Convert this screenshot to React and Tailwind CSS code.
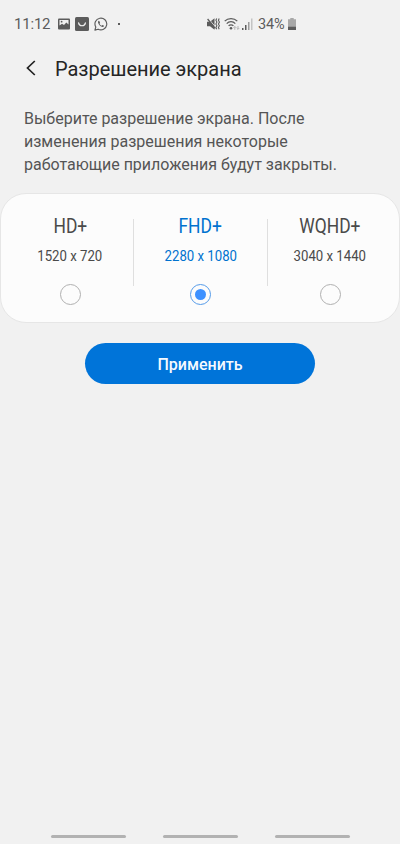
import { useState } from "react";

const resolutions = [
  { id: "hd", name: "HD+", size: "1520 x 720", width: "w-[126px]" },
  { id: "fhd", name: "FHD+", size: "2280 x 1080", width: "w-[133px]" },
  { id: "wqhd", name: "WQHD+", size: "3040 x 1440", width: "w-[124px]" },
];

function StatusBar() {
  return (
    <div className="h-12 pl-[14px] flex items-center text-[#5c5c5c]">
      <span className="w-[44px] text-[15px] leading-none tracking-[-0.2px]">11:12</span>

      {/* Gallery */}
      <svg width="12" height="12" viewBox="0 0 12 12">
        <rect y="0.5" width="12" height="11" rx="1" fill="currentColor" />
        <path d="M1.500 2h9v4.500L8.300 4.500 6 7 4 5.700 1.500 7.600z" fill="#f1f1f1" />
        <circle cx="3.600" cy="3.700" r="0.900" fill="currentColor" />
      </svg>

      {/* Store */}
      <svg className="ml-[5px]" width="14" height="14" viewBox="0 0 14 14" fill="none">
        <rect width="14" height="14" rx="1.5" fill="currentColor" />
        <path d="M3.600 5.800c.5 3.900 6.300 3.900 6.800 0" stroke="#f1f1f1" strokeWidth="1.200" strokeLinecap="round" />
      </svg>

      {/* WhatsApp */}
      <svg className="ml-[5px]" width="14" height="14" viewBox="0 0 14 14" fill="none">
        <path d="M.9 13.100 1.800 10A5.900 5.900 0 1 1 4.100 12.200z" stroke="currentColor" strokeWidth="1.150" strokeLinejoin="round" />
        <path
          d="M4.800 3.800c-.9.5-1 1.500-.5 2.500.8 1.700 1.900 2.800 3.600 3.500 1 .4 1.900.1 2.200-1l-1.700-.9-.8.8c-1-.4-1.700-1.100-2.100-2l.6-.8-.8-2z"
          fill="currentColor"
        />
      </svg>
      <span className="ml-[10px] w-[2px] h-[2px] bg-[#5c5c5c]" />

      {/* Muted with vibration */}
      <svg className="ml-[87px]" width="13" height="14" viewBox="0 0 13 14" fill="none">
        <path d="M0 4.700h3L7.500 1.200v11.600L3 9.300H0z" fill="currentColor" />
        <path d="M1.500 1.700 9 10.700" stroke="#f1f1f1" strokeWidth="0.900" />
        <path d="M.6 2 8.200 11.300" stroke="currentColor" strokeWidth="1.300" />
        <path d="m9.700 1.500-.8 1.800 1 1.800-1 1.800 1 1.800-1 1.800.8 1.800M12.200 1.500l-.8 1.800 1 1.800-1 1.800 1 1.800-1 1.800.8 1.800" stroke="currentColor" strokeWidth="1.100" />
      </svg>

      {/* Wi-Fi */}
      <svg className="ml-[4px]" width="17" height="14" viewBox="0 0 17 14" fill="none">
        <path d="M.7 4.200c3.300-3.600 9.300-3.600 12.600 0M2.700 6.600c2.300-2.500 6.300-2.500 8.600 0M4.600 8.900c1.300-1.400 3.500-1.400 4.800 0" stroke="currentColor" strokeWidth="1.250" />
        <circle cx="7" cy="11.200" r="1.300" fill="currentColor" />
        <path d="M10.800 12.800V9.500m-1.300 1.300 1.300-1.300 1.300 1.300M14 9v3.300m-1.300-1.300 1.300 1.300 1.300-1.300" stroke="#b5b5b5" strokeWidth="1" />
      </svg>

      {/* Signal */}
      <svg className="ml-[1px]" width="11" height="12" viewBox="0 0 11 12">
        <rect x="0" y="10" width="1.500" height="2" fill="currentColor" />
        <rect x="3" y="7" width="1.500" height="5" fill="currentColor" />
        <rect x="6" y="4" width="1.500" height="8" fill="#9c9c9c" />
        <rect x="9" y="0.500" width="1.500" height="11.500" fill="#c4c4c4" />
      </svg>

      <span className="ml-[5px] mt-[2px] w-[29px] text-[14.5px] leading-none tracking-[-0.2px]">34%</span>

      {/* Battery */}
      <svg className="ml-[1px]" width="8" height="12" viewBox="0 0 8 12">
        <path d="M2.300 0h3.400v1.200H8V8.500H0V1.200h2.300z" fill="#a8a8a8" />
        <path d="M0 8.500h8V12H0z" fill="#5c5c5c" />
      </svg>
    </div>
  );
}

function Option({ item, checked, onSelect }) {
  return (
    <button
      onClick={onSelect}
      className={`flex flex-col items-center pt-5 ${item.width} ${checked ? "text-[#0072cf]" : "text-[#4a4a4a]"}`}
    >
      <span className="text-[21px] leading-6 scale-x-[0.83] whitespace-nowrap">{item.name}</span>
      <span className="mt-[9px] text-[14.5px] leading-5 scale-x-[0.91] whitespace-nowrap">{item.size}</span>
      <span
        className={`mt-[17px] w-[21px] h-[21px] rounded-full border flex items-center justify-center ${
          checked ? "border-[#559be9]" : "border-[#b0b0b0]"
        }`}
      >
        {checked && <span className="w-[11px] h-[11px] rounded-full bg-[#3e91ff]" />}
      </span>
    </button>
  );
}

export default function App() {
  const [selected, setSelected] = useState("fhd");

  return (
    <div className="w-full h-screen bg-[#f1f1f1] flex flex-col overflow-hidden font-[Roboto,sans-serif]">
      <StatusBar />

      <header className="h-[42px] pl-[26px] flex items-center">
        <svg className="-mt-[2px]" width="10" height="16" viewBox="0 0 10 16" fill="none">
          <path d="M8.800 1 1.500 8l7.300 7" stroke="#222222" strokeWidth="1.700" />
        </svg>
        <h1 className="ml-[19px] text-[20px] leading-6 tracking-[-0.02px] text-[#252525] whitespace-nowrap">
          Разрешение экрана
        </h1>
      </header>

      <p className="mt-[17px] pl-6 text-[16px] leading-[23px] tracking-[-0.01px] text-[#555555] whitespace-nowrap">
        Выберите разрешение экрана. После
        <br />
        изменения разрешения некоторые
        <br />
        работающие приложения будут закрыты.
      </p>

      {/* Resolution card */}
      <div className="mt-[17px] h-[130px] px-[6px] flex shrink-0 bg-[#fcfcfc] border border-[#e6e6e6] rounded-[26px]">
        {resolutions.map((item, idx) => (
          <div key={item.id} className="flex">
            {idx > 0 && <div className="mt-[25px] w-px h-[67px] bg-[#dfdfdf]" />}
            <Option item={item} checked={selected === item.id} onSelect={() => setSelected(item.id)} />
          </div>
        ))}
      </div>

      <button className="mt-5 pt-[2px] w-[230px] h-[41px] mx-auto shrink-0 rounded-full bg-[#0074d9] text-[#f5faff] text-[16px] font-medium">
        Применить
      </button>

      {/* Navigation gestures */}
      <div className="mt-auto mb-[6px] flex justify-center gap-[37px]">
        <span className="w-[75px] h-[3px] rounded-full bg-[#b2b2b2]" />
        <span className="w-[75px] h-[3px] rounded-full bg-[#b2b2b2]" />
        <span className="w-[75px] h-[3px] rounded-full bg-[#b2b2b2]" />
      </div>
    </div>
  );
}
